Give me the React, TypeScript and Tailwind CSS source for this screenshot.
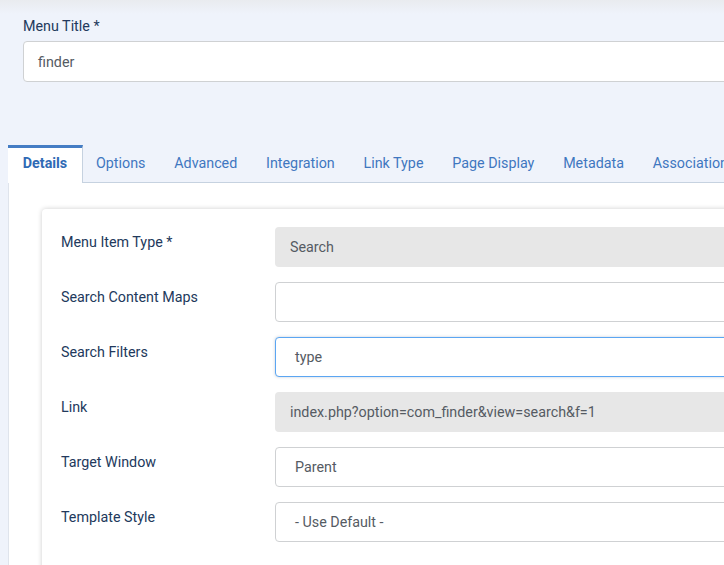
const tabs = ["Options", "Advanced", "Integration", "Link Type", "Page Display", "Metadata", "Associations"];

const rows = [
  { label: "Menu Item Type *", value: "Search", kind: "readonly" },
  { label: "Search Content Maps", value: "", kind: "select" },
  { label: "Search Filters", value: "type", kind: "focus" },
  { label: "Link", value: "index.php?option=com_finder&view=search&f=1", kind: "readonly" },
  { label: "Target Window", value: "Parent", kind: "select" },
  { label: "Template Style", value: "- Use Default -", kind: "select" },
];

function Field({ value, kind }: { value: string; kind: string }) {
  if (kind === "readonly") {
    return (
      <div className="flex h-[40px] w-[480px] items-center rounded-[4px] bg-[#e7e7e7] pt-[1px] pl-[15px] text-[#555b63]">
        {value}
      </div>
    );
  }
  return (
    <div
      className={
        kind === "focus"
          ? "flex h-[40px] w-[480px] items-center rounded-[4px] border border-[#5ba6f2] bg-white pt-[1px] pl-[19px] text-[#555b63] shadow-[0_0_3px_rgba(60,90,130,0.3)]"
          : "flex h-[40px] w-[480px] items-center rounded-[4px] border border-[#cfd1d3] bg-white pt-[1px] pl-[19px] text-[#555b63]"
      }
    >
      {value}
    </div>
  );
}

export default function App() {
  return (
    <div className="relative h-[565px] w-[724px] overflow-hidden bg-[#eff3fb] font-['Roboto',sans-serif] text-[14.3px]">
      <div className="absolute inset-x-0 top-0 h-[14px] bg-gradient-to-b from-[#e9ebef] to-[#eff3fb]" />

      <div className="relative pt-[17px] pl-[23px]">
        <label className="block leading-[18px] text-[#22395c]">Menu Title *</label>
        <div className="mt-[6px] flex h-[41px] w-[760px] items-center rounded-[4px] border border-[#cfd1d3] bg-white pt-[2px] pl-[14px] text-[#555b63]">
          finder
        </div>
      </div>

      <div className="mt-[63px] ml-[8px] flex h-[38px] w-[760px] items-stretch border-b border-[#c6d2e0]">
        <div className="relative -mb-px flex w-[75px] items-center justify-center border-t-[3px] border-r border-t-[#457dc4] border-r-[#c6d2e0] bg-white pb-[4px] font-bold text-[#2f6ab5]">
          Details
        </div>
        <div className="flex items-center gap-[28.8px] pl-[13px] whitespace-nowrap text-[#3f77c0]">
          {tabs.map((tab) => (
            <span key={tab}>{tab}</span>
          ))}
        </div>
      </div>

      <div className="ml-[8px] h-[400px] w-[760px] border-l border-[#dfe4ec] bg-white pt-[26px] pl-[33px]">
        <div className="h-[400px] w-[760px] rounded-[4px] bg-white pt-[18px] pl-[19px] shadow-[0_0_5px_rgba(0,0,0,0.2)]">
          <div className="flex flex-col gap-[15px]">
            {rows.map((row) => (
              <div key={row.label} className="flex items-start">
                <label className="w-[214px] pt-[6px] leading-[18px] text-[#22395c]">{row.label}</label>
                <Field value={row.value} kind={row.kind} />
              </div>
            ))}
          </div>
        </div>
      </div>
    </div>
  );
}
